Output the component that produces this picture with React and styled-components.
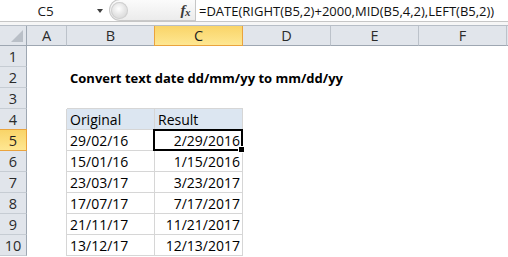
import styled, { createGlobalStyle, css } from 'styled-components';

const GlobalStyle = createGlobalStyle`
  html, body {
    margin: 0;
    padding: 0;
    background: #ffffff;
    overflow: hidden;
  }
  body {
    font-family: "Open Sans", "Liberation Sans", sans-serif;
  }
`;

const Frame = styled.div`
  width: 508px;
  height: 257px;
  overflow: hidden;
  background: #ffffff;
`;

const FormulaBar = styled.div`
  display: flex;
  align-items: stretch;
  height: 21px;
  border-bottom: 1px solid #c6c6c6;
  background: #ffffff;
`;

const NameBox = styled.div`
  width: 91px;
  display: flex;
  align-items: center;
  justify-content: center;
  font-size: 13.5px;
  color: #1a1a1a;
`;

const DropArrow = styled.div`
  width: 18px;
  display: flex;
  align-items: center;
  justify-content: center;
  &::after {
    content: '';
    border-left: 3.5px solid transparent;
    border-right: 3.5px solid transparent;
    border-top: 4px solid #404040;
  }
`;

const FnArea = styled.div`
  width: 86px;
  display: flex;
  align-items: center;
  justify-content: space-between;
  box-sizing: border-box;
  border-radius: 11px 0 0 11px;
  border: 1px solid #c9c9c9;
  border-right: none;
  background: linear-gradient(#fbfbfb, #ececec);
  padding: 0 5px 0 1px;
  margin-top: -1px;
  height: 22px;
`;

const Knob = styled.div`
  width: 17px;
  height: 17px;
  border-radius: 50%;
  background: radial-gradient(circle at 45% 40%, #ffffff 0, #e6e6e6 45%, #cfcfcf 100%);
  box-shadow: inset 0 0 0 1px #d0d0d0;
`;

const FxLabel = styled.span`
  font-family: "Liberation Serif", serif;
  font-style: italic;
  font-weight: bold;
  font-size: 15px;
  color: #3a3a3a;
  letter-spacing: -0.5px;
  & sub {
    font-size: 11px;
    vertical-align: -1px;
  }
`;

const FormulaInput = styled.div`
  flex: 1;
  display: flex;
  align-items: center;
  border-left: 1px solid #c6c6c6;
  padding-left: 3px;
  font-size: 13px;
  color: #111111;
  white-space: nowrap;
  overflow: hidden;
`;

const Spacer = styled.div`
  height: 3px;
  background: #f6f6f6;
  border-bottom: 1px solid #b7bec7;
`;

const Sheet = styled.div`
  display: grid;
  grid-template-columns: 27px 40px repeat(5, 88px) 1fr;
  grid-template-rows: 20px repeat(10, 21px);
  font-size: 14px;
`;

const headBase = css`
  box-sizing: border-box;
  display: flex;
  align-items: flex-end;
  justify-content: center;
  padding-bottom: 0;
  line-height: 18px;
  font-size: 14.5px;
  color: #2b2b2b;
  background: #e1e5eb;
  position: relative;
`;

const activeHead = css`
  background: linear-gradient(#f9d468, #fee792);
  color: #1f1f1f;
`;

const Corner = styled.div`
  ${headBase};
  border-right: 1px solid #9ea7b2;
  border-bottom: 1px solid #9ea7b2;
  &::after {
    content: '';
    position: absolute;
    right: 3px;
    bottom: 3px;
    border-left: 12px solid transparent;
    border-bottom: 12px solid #b9bfc7;
  }
`;

const ColHead = styled.div`
  ${headBase};
  border-right: 1px solid #bcc2ca;
  border-bottom: 1px solid #9ea7b2;
  ${p => p.$active && css`
    ${activeHead};
    border-right-color: #eaa33d;
    border-bottom-color: #eaa33d;
    box-shadow: -1px 0 0 #eaa33d;
  `}
`;

const RowHead = styled.div`
  ${headBase};
  border-right: 1px solid #9ea7b2;
  border-bottom: 1px solid #c6ccd3;
  ${p => p.$active && css`
    ${activeHead};
    border-bottom-color: #eaa33d;
    border-right-color: #eaa33d;
    box-shadow: 0 -1px 0 #eaa33d;
  `}
`;

const tableLine = '#d6d6d6';

const Cell = styled.div`
  box-sizing: border-box;
  position: relative;
  display: flex;
  align-items: flex-end;
  justify-content: ${p => (p.$align === 'right' ? 'flex-end' : 'flex-start')};
  padding: 0 2px 1px 3px;
  line-height: 17px;
  color: #000000;
  white-space: nowrap;
  font-weight: ${p => (p.$bold ? 700 : 400)};
  font-size: ${p => (p.$bold ? '13px' : 'inherit')};
  ${p => p.$table && css`
    border-right: 1px solid ${tableLine};
    border-bottom: 1px solid ${tableLine};
  `}
  ${p => p.$head && css`
    background: #dce6f1;
  `}
  box-shadow: ${p =>
    [p.$left && `-1px 0 0 ${tableLine}`, p.$top && `0 -1px 0 ${tableLine}`]
      .filter(Boolean)
      .join(', ') || 'none'};
`;

const SelectionBox = styled.div`
  position: absolute;
  top: -1px;
  left: -2px;
  right: -1px;
  bottom: -1px;
  border: 2px solid #000000;
  pointer-events: none;
`;

const FillHandle = styled.div`
  position: absolute;
  right: -4px;
  bottom: -4px;
  width: 5px;
  height: 5px;
  background: #000000;
  border: 1px solid #ffffff;
`;

const columns = ['A', 'B', 'C', 'D', 'E', 'F'];

const data = [
  ['29/02/16', '2/29/2016'],
  ['15/01/16', '1/15/2016'],
  ['23/03/17', '3/23/2017'],
  ['17/07/17', '7/17/2017'],
  ['21/11/17', '11/21/2017'],
  ['13/12/17', '12/13/2017'],
];

const cellFor = (row, col) => {
  if (row === 2 && col === 'B') return { text: 'Convert text date dd/mm/yy to mm/dd/yy', bold: true };
  if (row === 4 && col === 'B') return { text: 'Original', table: true, head: true, left: true, top: true };
  if (row === 4 && col === 'C') return { text: 'Result', table: true, head: true, top: true };
  if (row >= 5 && row <= 10) {
    const [orig, res] = data[row - 5];
    if (col === 'B') return { text: orig, table: true, left: true };
    if (col === 'C') return { text: res, table: true, align: 'right', selected: row === 5 };
  }
  return {};
};

export default function App() {
  const rows = Array.from({ length: 10 }, (_, i) => i + 1);
  return (
    <Frame>
      <GlobalStyle />
      <FormulaBar>
        <NameBox>C5</NameBox>
        <DropArrow />
        <FnArea>
          <Knob />
          <FxLabel>
            f<sub>x</sub>
          </FxLabel>
        </FnArea>
        <FormulaInput>=DATE(RIGHT(B5,2)+2000,MID(B5,4,2),LEFT(B5,2))</FormulaInput>
      </FormulaBar>
      <Spacer />
      <Sheet>
        <Corner />
        {columns.map(c => (
          <ColHead key={c} $active={c === 'C'}>
            {c}
          </ColHead>
        ))}
        <ColHead />
        {rows.map(r => (
          <RowGroup key={r} row={r} />
        ))}
      </Sheet>
    </Frame>
  );
}

function RowGroup({ row }) {
  return (
    <>
      <RowHead $active={row === 5}>{row}</RowHead>
      {columns.map(col => {
        const c = cellFor(row, col);
        return (
          <Cell
            key={col}
            $table={c.table}
            $head={c.head}
            $left={c.left}
            $top={c.top}
            $align={c.align}
            $bold={c.bold}
            style={c.selected ? { zIndex: 2 } : undefined}
          >
            {c.text}
            {c.selected && (
              <SelectionBox>
                <FillHandle />
              </SelectionBox>
            )}
          </Cell>
        );
      })}
      <Cell />
    </>
  );
}
